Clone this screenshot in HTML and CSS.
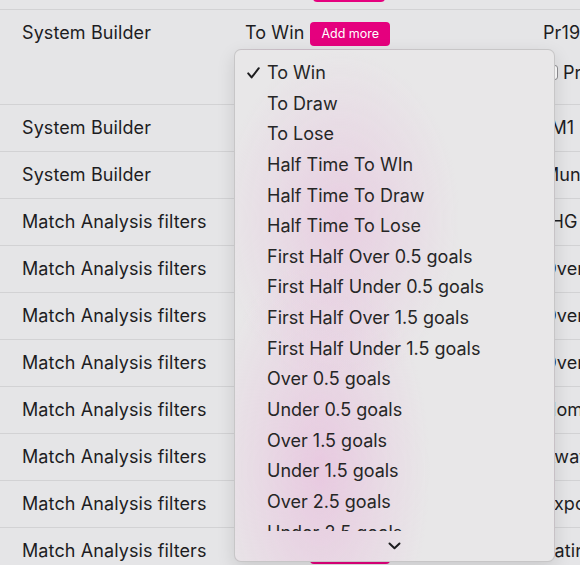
FILE: index.html
```html
<!DOCTYPE html>
<html>
<head>
<meta charset="utf-8">
<link rel="stylesheet" href="styles.css">
</head>
<body>
<div class="table">
  <div class="row row-prev">
    <div class="c1"></div>
    <div class="c2"><span class="btn btn-prev">Edit</span></div>
    <div class="c3"></div>
  </div>
  <div class="row row-tall">
    <div class="c1">System Builder</div>
    <div class="c2"><span>To Win</span><span class="btn">Add more</span></div>
    <div class="c3">
      <div>Pr1920 Season</div>
      <div class="check-line"><span class="box"></span><span>Premier League</span></div>
    </div>
  </div>
  <div class="row"><div class="c1">System Builder</div><div class="c2"></div><div class="c3">1M1 Filter</div></div>
  <div class="row"><div class="c1">System Builder</div><div class="c2"></div><div class="c3">Mun Filter</div></div>
  <div class="row"><div class="c1">Match Analysis filters</div><div class="c2"></div><div class="c3">1HG Filter</div></div>
  <div class="row"><div class="c1">Match Analysis filters</div><div class="c2"></div><div class="c3">Over 1.5</div></div>
  <div class="row"><div class="c1">Match Analysis filters</div><div class="c2"></div><div class="c3">Over 2.5</div></div>
  <div class="row"><div class="c1">Match Analysis filters</div><div class="c2"></div><div class="c3">Over 3.5</div></div>
  <div class="row"><div class="c1">Match Analysis filters</div><div class="c2"></div><div class="c3">Home</div></div>
  <div class="row"><div class="c1">Match Analysis filters</div><div class="c2"></div><div class="c3">Away</div></div>
  <div class="row"><div class="c1">Match Analysis filters</div><div class="c2"></div><div class="c3">Expo</div></div>
  <div class="row"><div class="c1">Match Analysis filters</div><div class="c2"><span>To Win</span><span class="btn">Add more</span></div><div class="c3">Rating</div></div>
</div>

<div class="menu">
  <div class="menu-list">
    <div class="item"><span class="tick"><svg width="13" height="12" viewBox="0 0 13 12"><path d="M1.2 6.4 L4.6 10.4 L11.8 1.2" fill="none" stroke="#1d1d1f" stroke-width="2" stroke-linecap="round" stroke-linejoin="round"/></svg></span><span>To Win</span></div>
    <div class="item"><span class="tick"></span><span>To Draw</span></div>
    <div class="item"><span class="tick"></span><span>To Lose</span></div>
    <div class="item"><span class="tick"></span><span>Half Time To WIn</span></div>
    <div class="item"><span class="tick"></span><span>Half Time To Draw</span></div>
    <div class="item"><span class="tick"></span><span>Half Time To Lose</span></div>
    <div class="item"><span class="tick"></span><span>First Half Over 0.5 goals</span></div>
    <div class="item"><span class="tick"></span><span>First Half Under 0.5 goals</span></div>
    <div class="item"><span class="tick"></span><span>First Half Over 1.5 goals</span></div>
    <div class="item"><span class="tick"></span><span>First Half Under 1.5 goals</span></div>
    <div class="item"><span class="tick"></span><span>Over 0.5 goals</span></div>
    <div class="item"><span class="tick"></span><span>Under 0.5 goals</span></div>
    <div class="item"><span class="tick"></span><span>Over 1.5 goals</span></div>
    <div class="item"><span class="tick"></span><span>Under 1.5 goals</span></div>
    <div class="item"><span class="tick"></span><span>Over 2.5 goals</span></div>
    <div class="item"><span class="tick"></span><span>Under 2.5 goals</span></div>
    <div class="item"><span class="tick"></span><span>Over 3.5 goals</span></div>
  </div>
  <div class="menu-foot">
    <svg width="13" height="8" viewBox="0 0 13 8"><path d="M1.5 1.5 L6.5 6.3 L11.5 1.5" fill="none" stroke="#1d1d1f" stroke-width="2" stroke-linecap="round" stroke-linejoin="round"/></svg>
  </div>
</div>
</body>
</html>
```

FILE: styles.css
```css
html, body {
  margin: 0;
  padding: 0;
}
body {
  width: 580px;
  height: 565px;
  overflow: hidden;
  background: #e5e5e7;
  font-family: "Inter", "Noto Sans", sans-serif;
  font-size: 18px;
  color: #1d1d1f;
  position: relative;
}
.table {
  margin-top: -37px;
  letter-spacing: 0.1px;
}
.row {
  display: grid;
  grid-template-columns: 223px 298px 1fr;
  padding-left: 22px;
  height: 47px;
  box-sizing: border-box;
  border-bottom: 1px solid #d2d2d4;
  white-space: nowrap;
}
.row-tall {
  height: 95px;
}
.c1, .c2, .c3 {
  padding-top: 11px;
  line-height: 24px;
}
.row-tall .c1, .row-tall .c2, .row-tall .c3 {
  padding-top: 10.5px;
}
.c2 {
  display: flex;
  align-items: flex-start;
  gap: 6px;
}
.btn {
  margin-top: 1px;
  height: 24px;
  padding: 0 11px;
  box-sizing: border-box;
  border-radius: 4px;
  background: #e5007e;
  color: #fff;
  font-size: 12.5px;
  letter-spacing: 0;
  line-height: 24px;
}
.row-prev .c2 {
  padding-top: 14px;
}
.btn-prev {
  margin-left: 68px;
  width: 72px;
}
.check-line {
  display: flex;
  align-items: center;
  gap: 5px;
  margin-top: 16px;
}
.box {
  width: 13px;
  height: 13px;
  border: 1px solid #8e8e92;
  border-radius: 3px;
  background: #fff;
}
.menu {
  position: absolute;
  left: 234px;
  top: 49px;
  width: 321px;
  height: 513px;
  box-sizing: border-box;
  border: 1px solid rgba(0, 0, 0, 0.14);
  border-radius: 7px;
  box-shadow: 0 6px 18px rgba(0, 0, 0, 0.12);
  background:
    radial-gradient(ellipse 110px 220px at 85px 420px, rgba(232, 172, 216, 0.5), rgba(232, 172, 216, 0) 100%),
    radial-gradient(ellipse 120px 170px at 105px 170px, rgba(232, 172, 216, 0.42), rgba(232, 172, 216, 0) 100%),
    #e8e7e8;
  display: flex;
  flex-direction: column;
  overflow: hidden;
  color: #262626;
}
.menu-list {
  height: 481px;
  overflow: hidden;
  padding-top: 8px;
  box-sizing: border-box;
  flex: none;
}
.item {
  display: flex;
  align-items: center;
  height: 30.65px;
  line-height: 30.65px;
  white-space: nowrap;
}
.tick {
  width: 32px;
  flex: none;
  box-sizing: border-box;
  padding-left: 12px;
  display: flex;
  align-items: center;
}
.menu-foot {
  flex: 1;
  display: flex;
  align-items: center;
  justify-content: center;
}
```
